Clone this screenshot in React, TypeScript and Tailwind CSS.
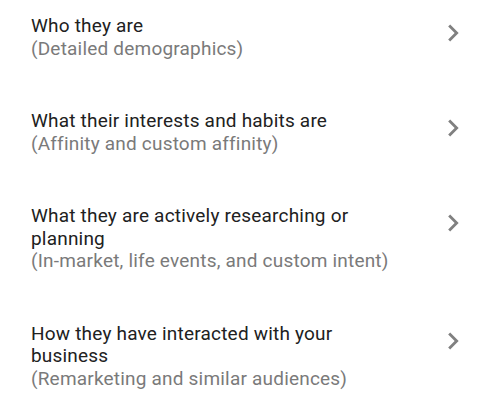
const items = [
	{
		title: "Who they are",
		sub: "(Detailed demographics)",
	},
	{
		title: "What their interests and habits are",
		sub: "(Affinity and custom affinity)",
	},
	{
		title: "What they are actively researching or planning",
		sub: "(In-market, life events, and custom intent)",
	},
	{
		title: "How they have interacted with your business",
		sub: "(Remarketing and similar audiences)",
	},
];

function ChevronRight() {
	return (
		<svg viewBox="0 0 24 24" className="w-[34px] h-[34px] mt-[1px] shrink-0" fill="#808080">
			<path d="M10 6L8.59 7.41 13.17 12l-4.58 4.59L10 18l6-6z" />
		</svg>
	);
}

export default function App() {
	return (
		<div
			className="w-[481px] h-[411px] bg-white overflow-hidden pt-[15px] pl-[31px] pr-[11px] flex flex-col gap-[50px]"
			style={{ fontFamily: "Roboto, 'Liberation Sans', sans-serif" }}
		>
			{items.map((item) => (
				<div key={item.title} className="flex items-start">
					<div className="w-[368px] text-[19px] leading-[22.5px] tracking-[0.2px]">
						<div className="text-[#212121]">{item.title}</div>
						<div className="text-[#7a7a7a]">{item.sub}</div>
					</div>
					<div className="ml-auto">
						<ChevronRight />
					</div>
				</div>
			))}
		</div>
	);
}
